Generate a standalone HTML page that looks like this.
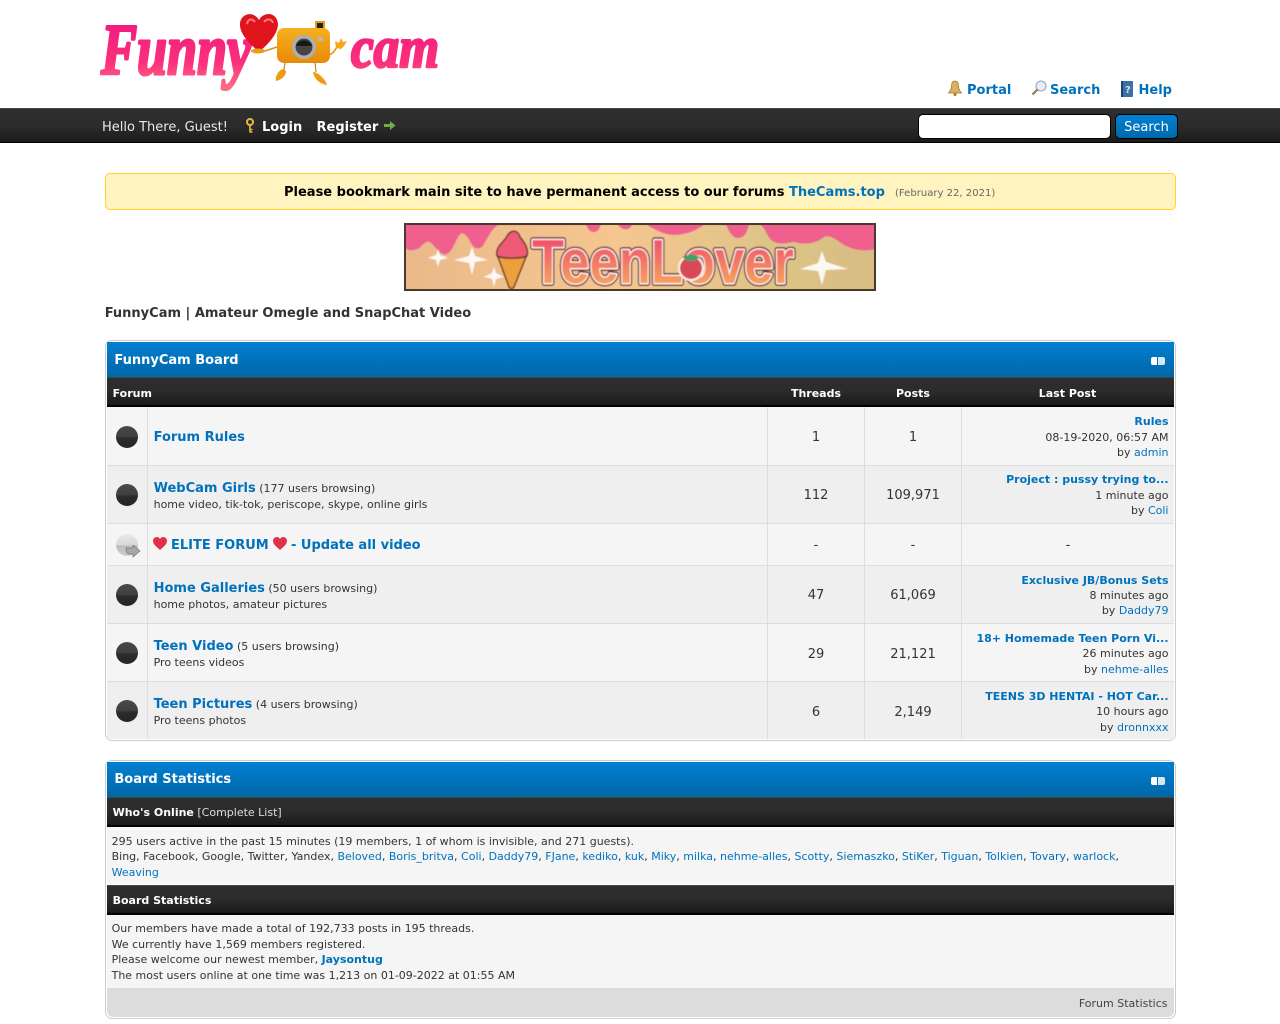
<!DOCTYPE html>
<html><head><meta charset="utf-8"><title>FunnyCam</title>
<style>
html,body{margin:0;padding:0;background:#fff;width:1280px;height:1024px;overflow:hidden}
body{position:relative;font-family:"DejaVu Sans",sans-serif;font-size:11px;color:#333}
div,span.t,a.t,svg.a{position:absolute}
.t{position:absolute;white-space:nowrap;line-height:16px}
a{color:#0072bc;text-decoration:none}
b{font-weight:bold}
.f{font-size:13px;font-weight:bold}
.c{text-align:center}.r{text-align:right}
.w{color:#fff}
.top{font-size:13px;font-weight:bold}
.dark{left:107px;width:1067px;background:linear-gradient(#2e2e2e 0,#2b2b2b 50%,#1a1a1a 100%);border-top:1px solid #3c4a40;border-bottom:2px solid #000;box-sizing:border-box}
.blue{left:107px;width:1067px;height:35px;background:linear-gradient(#0280d2,#0066a8)}
.box{left:105px;width:1069px;border:1px solid #ccc;border-radius:7px;background:#fff}
.row{left:107px;width:1067px}
.sep{width:1px;background:#ddd}
.hline{left:107px;width:1067px;height:1px;background:#ddd}
.ball{left:116px;width:22px;height:22px;border-radius:50%;background:linear-gradient(#4a4a4a 0,#3e3e3e 50%,#2c2c2c 54%,#252525 100%)}
</style></head><body>

<svg class="a" style="left:95px;top:5px" width="350" height="90" viewBox="95 5 350 90">
<defs><linearGradient id="p" gradientUnits="userSpaceOnUse" x1="0" y1="18" x2="0" y2="86"><stop offset="0" stop-color="#f01a80"/><stop offset=".65" stop-color="#fb2f7c"/><stop offset="1" stop-color="#fd6a82"/></linearGradient>
<linearGradient id="o" x1="0" y1="0" x2="0" y2="1"><stop offset="0" stop-color="#f7b01e"/><stop offset="1" stop-color="#e88a08"/></linearGradient></defs>
<text x="101" y="74" font-family="Liberation Serif" font-style="italic" font-weight="bold" font-size="72" fill="url(#p)" stroke="url(#p)" stroke-width="3" stroke-linejoin="round" textLength="150" lengthAdjust="spacingAndGlyphs">Funny</text>
<text x="351" y="67" font-family="Liberation Serif" font-style="italic" font-weight="bold" font-size="58" fill="url(#p)" stroke="url(#p)" stroke-width="2.5" stroke-linejoin="round" textLength="88" lengthAdjust="spacingAndGlyphs">cam</text>
<path d="M259 52C250 44 239 34 240 23C241 14 253 10 259 20C264 11 277 12 278 24C278 35 266 46 259 52Z" fill="#e0141c"/>
<path d="M247 24C248 19 252 18 255 22M264 22C267 18 272 19 273 23" fill="none" stroke="#ff7a7a" stroke-width="2"/>
<ellipse cx="258" cy="51" rx="7" ry="2.500" fill="#e8a010"/>
<path d="M265 51L277 47M329 55C333 54 335 50 337 47" fill="none" stroke="#e09010" stroke-width="1.500"/>
<path d="M336 48L335 41L339 43L341 38L343 42L347 41L344 46L341 49Z" fill="#f5a81a"/>
<rect x="315" y="21" width="10" height="10" fill="#e89a10"/><rect x="317" y="23" width="6" height="6" fill="#222"/>
<rect x="277" y="28" width="53" height="35" rx="7" fill="url(#o)"/>
<circle cx="304" cy="47" r="12" fill="#a8b0b8"/><circle cx="304" cy="47" r="8.500" fill="#4a4440"/><path d="M296 46a8.500 8.500 0 0 1 16 0Z" fill="#181818"/>
<rect x="318" y="37" width="5" height="4" fill="#b8b8b8"/>
<path d="M285 62L284 70M315 62L316 72" stroke="#c88a20" stroke-width="1.200" fill="none"/>
<path d="M283 69C277 71 275 78 276 81C281 80 286 76 286 71Z" fill="#f09a10"/>
<path d="M313 72C318 72 326 80 327 85C320 84 314 79 313 72Z" fill="#f09a10"/>
</svg>

<svg class="a" style="left:947px;top:80px" width="16" height="17" viewBox="0 0 16 17"><path d="M8 1C5.500 1 4.500 3 4.500 6C4.500 9.500 3 11 1.500 13H14.500C13 11 11.500 9.500 11.500 6C11.500 3 10.500 1 8 1Z" fill="#d9b060" stroke="#a07820" stroke-width=".7"/><circle cx="8" cy="14.500" r="1.500" fill="#a07820"/></svg>
<a class="t top" style="left:967px;top:83px">Portal</a>
<svg class="a" style="left:1031px;top:80px" width="16" height="16" viewBox="0 0 16 16"><circle cx="10" cy="6" r="5" fill="#e6eff6" stroke="#98a8b4" stroke-width="1.100"/><path d="M6.500 9.500L1.500 14.500" stroke="#8c7a5c" stroke-width="2.200"/></svg>
<a class="t top" style="left:1050px;top:83px">Search</a>
<svg class="a" style="left:1120px;top:81px" width="14" height="16" viewBox="0 0 14 16"><rect x="1" y="0" width="12" height="16" rx="1" fill="#3a70a6"/><rect x="1" y="0" width="2" height="16" fill="#1e456e"/><text x="5" y="12" font-size="10" font-weight="bold" fill="#dde" font-family="DejaVu Sans">?</text></svg>
<a class="t top" style="left:1138.500px;top:83px">Help</a>

<div style="left:0;top:108px;width:1280px;height:35px;box-sizing:border-box;background:linear-gradient(#2e2e2e,#2c2c2c 50%,#1b1b1b);border-top:1px solid #3c4a40;border-bottom:1px solid #000"></div>
<span class="t" style="left:102px;top:120px;font-size:13px;color:#e8e8e8">Hello There, Guest!</span>
<svg class="a" style="left:244px;top:118px" width="12" height="16" viewBox="0 0 12 16"><circle cx="6" cy="4" r="3" fill="none" stroke="#e8b93a" stroke-width="2"/><path d="M6 7V14.500M6 11.500H8.500M6 14H8.500" stroke="#e8b93a" stroke-width="1.600" fill="none"/></svg>
<span class="t w top" style="left:262px;top:120px">Login</span>
<span class="t w top" style="left:316.500px;top:120px">Register</span>
<svg class="a" style="left:384px;top:120px" width="12" height="11" viewBox="0 0 12 11"><path d="M0 4H6V1L11.500 5.500L6 10V7H0Z" fill="#6fae4a"/></svg>
<div style="left:918px;top:114px;width:193px;height:25px;box-sizing:border-box;background:#fff;border:1px solid #000;border-radius:5px"></div>
<div style="left:1115px;top:114px;width:63px;height:25px;box-sizing:border-box;background:linear-gradient(#0280d2,#0068ac);border:1px solid #000;border-radius:5px;color:#fff;font-size:13px;line-height:25px;text-align:center">Search</div>

<div style="left:105px;top:173px;width:1071px;height:37px;box-sizing:border-box;background:#fff4bf;border:1px solid #ffd324;border-radius:5px"></div>
<span class="t" style="left:284px;top:185px;font-size:13px;font-weight:bold;color:#000">Please bookmark main site to have permanent access to our forums <a>TheCams.top</a></span>
<span class="t" style="left:895px;top:186px;font-size:10.050px;color:#666">(February 22, 2021)</span>

<svg class="a" style="left:404px;top:223px" width="472" height="68" viewBox="0 0 472 68">
<defs><linearGradient id="bg" x1="0" y1="0" x2="1" y2="0"><stop offset="0" stop-color="#e9b98a"/><stop offset=".45" stop-color="#f6c690"/><stop offset=".8" stop-color="#dcc486"/><stop offset="1" stop-color="#d8bc84"/></linearGradient>
<linearGradient id="tx" gradientUnits="userSpaceOnUse" x1="0" y1="10" x2="0" y2="60"><stop offset="0" stop-color="#ee4572"/><stop offset="1" stop-color="#f6a05c"/></linearGradient>
<filter id="bl"><feGaussianBlur stdDeviation=".5"/></filter></defs>
<g filter="url(#bl)">
<rect width="472" height="68" fill="url(#bg)"/>
<path d="M0 0H472V26C460 29 447 27 437 20C430 15 425 12 420 14C412 21 400 22 390 19C380 21 372 22 366 16C362 10 360 4 356 2H345C343 10 340 15 334 15C328 15 325 8 322 2H300C290 9 280 12 270 12C260 12 250 6 243 2H228C226 6 223 7 220 6C217 6 215 3 213 1H197C195 8 193 9 189 9C186 9 184 6 182 2H94C88 6 84 14 80 21C78 25 74 27 70 24C66 20 64 12 58 10C52 13 50 28 43 31C36 33 32 24 26 19C20 17 18 26 10 27C6 28 2 27 0 23Z" fill="#f0608e"/>
<g fill="#fff" opacity=".9"><path d="M68 24L71 33L84 37L71 39L68 52L65 40L50 37L65 33Z"/><path d="M418 28L422 39L444 46L422 47L418 62L414 48L396 46L414 40Z"/><path d="M34 26L36 32L44 35L36 37L34 44L32 37L24 35L32 32Z"/><path d="M90 44L92 50L100 54L92 56L90 64L88 56L80 54L88 50Z"/></g>
<g transform="translate(90,0)"><path d="M4 34H32L20 64C19 66 16 66 15 64Z" fill="#eca03c" stroke="#6a3a2a" stroke-width="1.500"/><path d="M3 33C1 25 8 20 12 15C16 6 24 6 26 14C31 20 35 26 33 33C26 36 10 36 3 33Z" fill="#ee5a74" stroke="#6a3a2a" stroke-width="1.500"/></g>
<text x="128" y="60" font-family="Liberation Sans" font-weight="bold" font-size="62" fill="none" stroke="#6a2a3a" stroke-width="6" stroke-linejoin="round" textLength="262" lengthAdjust="spacingAndGlyphs">TeenLover</text>
<text x="128" y="60" font-family="Liberation Sans" font-weight="bold" font-size="62" fill="url(#tx)" stroke="#fff0e8" stroke-width="3" paint-order="stroke" stroke-linejoin="round" textLength="262" lengthAdjust="spacingAndGlyphs">TeenLover</text>
<circle cx="287" cy="45" r="12" fill="#d84a58" stroke="#fff0e8" stroke-width="2"/><path d="M278 34L287 31L296 34L290 38L284 38Z" fill="#3fa06a"/>
</g>
<rect x="1" y="1" width="470" height="66" fill="none" stroke="#4a3a2a" stroke-width="2"/>
</svg>

<span class="t" style="left:104.700px;top:306px;font-size:13px;font-weight:bold">FunnyCam | Amateur Omegle and SnapChat Video</span>

<div class="box" style="top:340px;height:399px"></div>
<div class="blue" style="top:342px"></div>
<span class="t w" style="left:114.400px;top:353px;font-size:13px;font-weight:bold">FunnyCam Board</span>
<div style="left:1151px;top:357px;width:6px;height:8px;border-radius:2px 0 0 2px;background:#fff"></div><div style="left:1158px;top:357px;width:7px;height:8px;border-radius:0 2px 2px 0;background:#d4e8f4"></div>
<div class="dark" style="top:377px;height:30px"></div>
<span class="t w" style="left:112.600px;top:386px"><b>Forum</b></span>
<span class="t w c" style="left:768px;width:96px;top:386px"><b>Threads</b></span>
<span class="t w c" style="left:865px;width:96px;top:386px"><b>Posts</b></span>
<span class="t w c" style="left:962px;width:211px;top:386px"><b>Last Post</b></span>

<div class="row" style="top:407px;height:58px;background:#f5f5f5"></div>
<div class="row" style="top:466px;height:57px;background:#efefef"></div>
<div class="row" style="top:524px;height:41px;background:#f5f5f5"></div>
<div class="row" style="top:566px;height:57px;background:#efefef"></div>
<div class="row" style="top:624px;height:57px;background:#f5f5f5"></div>
<div class="row" style="top:682px;height:57px;background:#efefef"></div>
<div class="hline" style="top:465px"></div><div class="hline" style="top:523px"></div><div class="hline" style="top:565px"></div><div class="hline" style="top:623px"></div><div class="hline" style="top:681px"></div>
<div class="sep" style="left:147px;top:407px;height:332px"></div>
<div class="sep" style="left:767px;top:407px;height:332px"></div>
<div class="sep" style="left:864px;top:407px;height:332px"></div>
<div class="sep" style="left:961px;top:407px;height:332px"></div>

<div class="ball" style="top:426px"></div>
<div class="ball" style="top:484px"></div>
<div class="ball" style="top:534px;background:linear-gradient(#e8e8e8,#d8d8d8 50%,#bcbcbc 54%,#cfcfcf)"></div>
<svg class="a" style="left:125px;top:545px" width="16" height="13" viewBox="0 0 16 13"><path d="M1 3H8V0L15 6L8 12V9H4C2 9 1 6 1 3Z" fill="#a8a8a8" stroke="#777" stroke-width=".7"/></svg>
<div class="ball" style="top:584px"></div>
<div class="ball" style="top:642px"></div>
<div class="ball" style="top:700px"></div>

<a class="t f" style="left:153.600px;top:430px">Forum Rules</a>
<span class="t" style="left:153.600px;top:481px"><a class="f">WebCam Girls</a> (177 users browsing)</span>
<span class="t" style="left:153.600px;top:497px">home video, tik-tok, periscope, skype, online girls</span>
<svg class="a" style="left:153px;top:537px" width="14" height="14" viewBox="0 0 14 14"><path d="M7 13C4 10 0 7.500 0 4C0 1.500 1.800 0 3.800 0C5.200 0 6.300 .8 7 2C7.700 .8 8.800 0 10.200 0C12.200 0 14 1.500 14 4C14 7.500 10 10 7 13Z" fill="#e0304a"/></svg>
<a class="t f" style="left:171px;top:538px">ELITE FORUM</a>
<svg class="a" style="left:273px;top:537px" width="14" height="14" viewBox="0 0 14 14"><path d="M7 13C4 10 0 7.500 0 4C0 1.500 1.800 0 3.800 0C5.200 0 6.300 .8 7 2C7.700 .8 8.800 0 10.200 0C12.200 0 14 1.500 14 4C14 7.500 10 10 7 13Z" fill="#e0304a"/></svg>
<a class="t f" style="left:291px;top:538px">- Update all video</a>
<span class="t" style="left:153.600px;top:581px"><a class="f">Home Galleries</a> (50 users browsing)</span>
<span class="t" style="left:153.600px;top:597px">home photos, amateur pictures</span>
<span class="t" style="left:153.600px;top:639px"><a class="f">Teen Video</a> (5 users browsing)</span>
<span class="t" style="left:153.600px;top:655px">Pro teens videos</span>
<span class="t" style="left:153.600px;top:697px"><a class="f">Teen Pictures</a> (4 users browsing)</span>
<span class="t" style="left:153.600px;top:713px">Pro teens photos</span>

<span class="t c" style="left:768px;width:96px;top:430px;font-size:13px">1</span><span class="t c" style="left:865px;width:96px;top:430px;font-size:13px">1</span>
<span class="t c" style="left:768px;width:96px;top:488px;font-size:13px">112</span><span class="t c" style="left:865px;width:96px;top:488px;font-size:13px">109,971</span>
<span class="t c" style="left:768px;width:96px;top:538px;font-size:13px">-</span><span class="t c" style="left:865px;width:96px;top:538px;font-size:13px">-</span><span class="t c" style="left:962px;width:212px;top:538px;font-size:13px">-</span>
<span class="t c" style="left:768px;width:96px;top:588px;font-size:13px">47</span><span class="t c" style="left:865px;width:96px;top:588px;font-size:13px">61,069</span>
<span class="t c" style="left:768px;width:96px;top:647px;font-size:13px">29</span><span class="t c" style="left:865px;width:96px;top:647px;font-size:13px">21,121</span>
<span class="t c" style="left:768px;width:96px;top:705px;font-size:13px">6</span><span class="t c" style="left:865px;width:96px;top:705px;font-size:13px">2,149</span>

<span class="t r" style="right:111.500px;top:414px"><a><b>Rules</b></a></span>
<span class="t r" style="right:111.500px;top:430px">08-19-2020, 06:57 AM</span>
<span class="t r" style="right:111.500px;top:445px">by <a>admin</a></span>
<span class="t r" style="right:111.500px;top:472px"><a><b>Project : pussy trying to...</b></a></span>
<span class="t r" style="right:111.500px;top:488px">1 minute ago</span>
<span class="t r" style="right:111.500px;top:503px">by <a>Coli</a></span>
<span class="t r" style="right:111.500px;top:573px"><a><b>Exclusive JB/Bonus Sets</b></a></span>
<span class="t r" style="right:111.500px;top:588px">8 minutes ago</span>
<span class="t r" style="right:111.500px;top:603px">by <a>Daddy79</a></span>
<span class="t r" style="right:111.500px;top:631px"><a><b>18+ Homemade Teen Porn Vi...</b></a></span>
<span class="t r" style="right:111.500px;top:646px">26 minutes ago</span>
<span class="t r" style="right:111.500px;top:662px">by <a>nehme-alles</a></span>
<span class="t r" style="right:111.500px;top:689px"><a><b>TEENS 3D HENTAI - HOT Car...</b></a></span>
<span class="t r" style="right:111.500px;top:704px">10 hours ago</span>
<span class="t r" style="right:111.500px;top:720px">by <a>dronnxxx</a></span>

<div class="box" style="top:760px;height:257px"></div>
<div class="blue" style="top:762px"></div>
<span class="t w" style="left:114.400px;top:772px;font-size:13px;font-weight:bold">Board Statistics</span>
<div style="left:1151px;top:777px;width:6px;height:8px;border-radius:2px 0 0 2px;background:#fff"></div><div style="left:1158px;top:777px;width:7px;height:8px;border-radius:0 2px 2px 0;background:#d4e8f4"></div>
<div class="dark" style="top:797px;height:30px"></div>
<span class="t w" style="left:112.600px;top:805px"><b>Who's Online</b> <span style="color:#ddd">[Complete List]</span></span>
<div class="row" style="top:827px;height:57px;background:#f5f5f5"></div>
<span class="t" style="left:111.600px;top:834px">295 users active in the past 15 minutes (19 members, 1 of whom is invisible, and 271 guests).</span>
<span class="t" style="left:111.600px;top:849px">Bing, Facebook, Google, Twitter, Yandex, <a>Beloved</a>, <a>Boris_britva</a>, <a>Coli</a>, <a>Daddy79</a>, <a>FJane</a>, <a>kediko</a>, <a>kuk</a>, <a>Miky</a>, <a>milka</a>, <a>nehme-alles</a>, <a>Scotty</a>, <a>Siemaszko</a>, <a>StiKer</a>, <a>Tiguan</a>, <a>Tolkien</a>, <a>Tovary</a>, <a>warlock</a>,</span>
<span class="t" style="left:111.600px;top:865px"><a>Weaving</a></span>
<div class="dark" style="top:885px;height:30px"></div>
<span class="t w" style="left:112.600px;top:893px"><b>Board Statistics</b></span>
<div class="row" style="top:915px;height:73px;background:#f5f5f5"></div>
<span class="t" style="left:111.600px;top:921px">Our members have made a total of 192,733 posts in 195 threads.</span>
<span class="t" style="left:111.600px;top:937px">We currently have 1,569 members registered.</span>
<span class="t" style="left:111.600px;top:952px">Please welcome our newest member, <a><b>Jaysontug</b></a></span>
<span class="t" style="left:111.600px;top:968px">The most users online at one time was 1,213 on 01-09-2022 at 01:55 AM</span>
<div class="hline" style="top:988px"></div>
<div class="row" style="top:989px;height:28px;background:#dcdcdc;border-radius:0 0 6px 6px"></div>
<span class="t r" style="right:112.500px;top:996px;color:#444">Forum Statistics</span>
</body></html>
